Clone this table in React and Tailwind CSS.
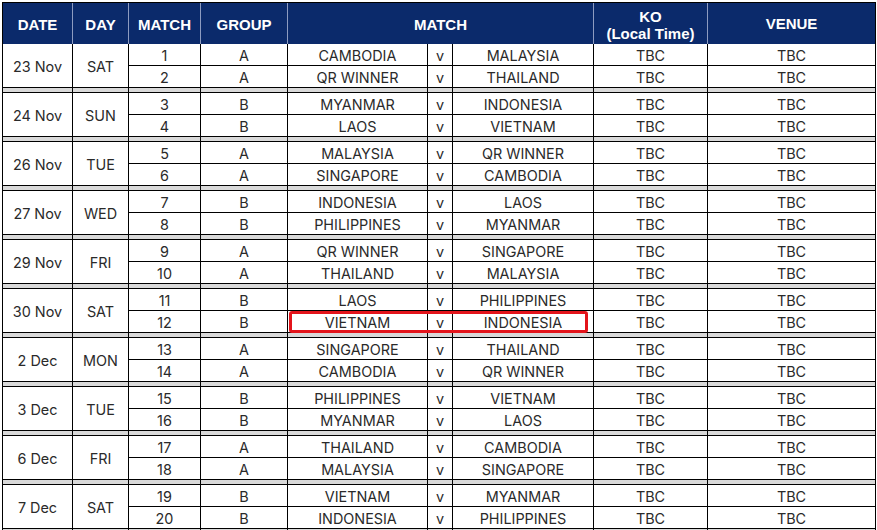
const schedule = [
  { date: "23 Nov", day: "SAT", games: [[1, "A", "CAMBODIA", "MALAYSIA"], [2, "A", "QR WINNER", "THAILAND"]] },
  { date: "24 Nov", day: "SUN", games: [[3, "B", "MYANMAR", "INDONESIA"], [4, "B", "LAOS", "VIETNAM"]] },
  { date: "26 Nov", day: "TUE", games: [[5, "A", "MALAYSIA", "QR WINNER"], [6, "A", "SINGAPORE", "CAMBODIA"]] },
  { date: "27 Nov", day: "WED", games: [[7, "B", "INDONESIA", "LAOS"], [8, "B", "PHILIPPINES", "MYANMAR"]] },
  { date: "29 Nov", day: "FRI", games: [[9, "A", "QR WINNER", "SINGAPORE"], [10, "A", "THAILAND", "MALAYSIA"]] },
  { date: "30 Nov", day: "SAT", games: [[11, "B", "LAOS", "PHILIPPINES"], [12, "B", "VIETNAM", "INDONESIA"]] },
  { date: "2 Dec", day: "MON", games: [[13, "A", "SINGAPORE", "THAILAND"], [14, "A", "CAMBODIA", "QR WINNER"]] },
  { date: "3 Dec", day: "TUE", games: [[15, "B", "PHILIPPINES", "VIETNAM"], [16, "B", "MYANMAR", "LAOS"]] },
  { date: "6 Dec", day: "FRI", games: [[17, "A", "THAILAND", "CAMBODIA"], [18, "A", "MALAYSIA", "SINGAPORE"]] },
  { date: "7 Dec", day: "SAT", games: [[19, "B", "VIETNAM", "MYANMAR"], [20, "B", "INDONESIA", "PHILIPPINES"]] },
];

const cols = "grid grid-cols-[70px_56px_72px_87px_140px_25px_141px_114px_167px]";
const cell = "flex items-center justify-center pt-[2px] border-r border-b border-black";

function Group({ g }) {
  return (
    <div className={cols + " grid-rows-[22px_22px_5px]"}>
      <div className={cell + " row-span-2"}>{g.date}</div>
      <div className={cell + " row-span-2"}>{g.day}</div>
      {g.games.map(([no, grp, home, away], i) => (
        <div key={no} className="contents">
          <div className={cell} style={{ gridRow: i + 1, gridColumn: 3 }}>{no}</div>
          <div className={cell} style={{ gridRow: i + 1, gridColumn: 4 }}>{grp}</div>
          <div className={cell} style={{ gridRow: i + 1, gridColumn: 5 }}>{home}</div>
          <div className={cell} style={{ gridRow: i + 1, gridColumn: 6 }}>v</div>
          <div className={cell} style={{ gridRow: i + 1, gridColumn: 7 }}>{away}</div>
          <div className={cell} style={{ gridRow: i + 1, gridColumn: 8 }}>TBC</div>
          <div className="flex items-center justify-center pt-[2px] border-b border-black" style={{ gridRow: i + 1, gridColumn: 9 }}>TBC</div>
        </div>
      ))}
      {[0, 1, 2, 3, 4, 5, 6, 7].map((k) => (
        <div key={k} className="bg-[#d9d9d9] border-r border-b border-black" />
      ))}
      <div className="bg-[#d9d9d9] border-b border-black" />
    </div>
  );
}

export default function App() {
  const head = "flex items-center justify-center pt-[2px] border-r border-[#8d9bc0] text-center leading-[17px]";
  return (
    <div className="bg-white p-[2px] h-[530px] overflow-hidden">
      <div className="relative border border-black w-[874px] text-[#2a2a2a] text-[14.4px] font-['Inter','Liberation_Sans',sans-serif]">
        <div className={cols + " h-[41px] bg-[#0b2a6b] text-white font-bold text-[15px] font-['Liberation_Sans',Arial,sans-serif]"}>
          <div className={head}>DATE</div>
          <div className={head}>DAY</div>
          <div className={head}>MATCH</div>
          <div className={head}>GROUP</div>
          <div className={head + " col-span-3"}>MATCH</div>
          <div className={head + " flex-col"}>
            <span>KO</span>
            <span>(Local Time)</span>
          </div>
          <div className="flex items-center justify-center pt-[2px]">VENUE</div>
        </div>
        {schedule.map((g) => (
          <Group key={g.date} g={g} />
        ))}
        <div className="absolute left-[286px] top-[308px] w-[299px] h-[22px] border-[3px] border-[#e3141b] rounded-[3px]" />
      </div>
    </div>
  );
}
